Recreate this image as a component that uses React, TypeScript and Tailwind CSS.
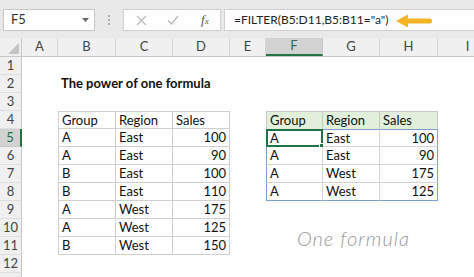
import React from "react";

const FONT = { fontFamily: "Lato, 'Open Sans', sans-serif" };

const colWidths = [36, 58, 57, 57, 36, 57, 57, 58, 60];
const colNames = ["A", "B", "C", "D", "E", "F", "G", "H", "I"];

type Cell = { text?: string; right?: boolean; bold?: boolean; cls?: string; sel?: boolean };

const t1 = [
  ["Group", "Region", "Sales"],
  ["A", "East", "100"],
  ["A", "East", "90"],
  ["B", "East", "100"],
  ["B", "East", "110"],
  ["A", "West", "175"],
  ["A", "West", "125"],
  ["B", "West", "150"],
];
const t2 = [
  ["Group", "Region", "Sales"],
  ["A", "East", "100"],
  ["A", "East", "90"],
  ["A", "West", "175"],
  ["A", "West", "125"],
];

function cellFor(row: number, col: number): Cell {
  if (row === 2 && col === 1) return { text: "The power of one formula", bold: true };
  if (row >= 4 && row <= 11 && col >= 1 && col <= 3) {
    const r = row - 4;
    const c = col - 1;
    let cls = "border-r border-b border-[#d0d0d0]";
    if (c === 0) cls += " border-l";
    if (r === 0) cls += " border-t";
    return { text: t1[r][c], right: r > 0 && c === 2, cls };
  }
  if (row >= 4 && row <= 8 && col >= 5 && col <= 7) {
    const r = row - 4;
    const c = col - 5;
    let cls = "";
    if (r === 0) {
      cls = "bg-[#e2efda] border-t border-r border-[#c9c9c9]";
      if (c === 0) cls += " border-l";
    } else {
      cls = "border-b";
      cls += r === 4 ? " border-b-[#7f9fd3]" : " border-b-[#d4d4d4]";
      cls += c === 2 ? " border-r border-r-[#7f9fd3]" : " border-r border-r-[#d4d4d4]";
      if (c === 0) cls += " border-l border-l-[#7f9fd3]";
      if (r === 1) cls += " border-t border-t-[#7f9fd3]";
    }
    return { text: t2[r][c], right: r > 0 && c === 2, cls, sel: row === 5 && col === 5 };
  }
  return {};
}

function Arrow() {
  return (
    <svg width="38" height="16" viewBox="0 0 38 16">
      <path d="M1 8 L13 1.5 L13 14.5 Z" fill="#f4b324" />
      <rect x="11" y="5.5" width="26" height="5" rx="2.5" fill="#f4b324" />
    </svg>
  );
}

export default function App() {
  const rows = Array.from({ length: 12 }, (_, i) => i + 1);
  return (
    <div className="relative w-[474px] h-[277px] overflow-hidden bg-white" style={FONT}>
      {/* Toolbar */}
      <div className="h-[38px] bg-[#e9e9e9] flex items-start pt-[9px] pl-[3px]">
        <div className="w-[92px] h-[22px] bg-white border border-[#c8c8c8] flex items-center justify-between pl-[7px] pr-[5px] text-[13px] text-[#333]">
          <span>F5</span>
          <svg width="7" height="5" viewBox="0 0 7 5"><path d="M0 0 L7 0 L3.5 4 Z" fill="#666" /></svg>
        </div>
        <div className="w-[28px] h-[22px] flex flex-col items-center justify-center gap-[2px]">
          <div className="w-[2px] h-[2px] bg-[#b0b0b0]" />
          <div className="w-[2px] h-[2px] bg-[#b0b0b0]" />
          <div className="w-[2px] h-[2px] bg-[#b0b0b0]" />
        </div>
        <div className="w-[98px] h-[22px] bg-white border border-[#d0d0d0] flex items-center pl-[12px]">
          <svg width="11" height="11" viewBox="0 0 11 11" className="mr-[20px]">
            <path d="M1 1 L10 10 M10 1 L1 10" stroke="#b8b8b8" strokeWidth="1.2" />
          </svg>
          <svg width="12" height="10" viewBox="0 0 12 10" className="mr-[22px]">
            <path d="M1 5.5 L4.5 9 L11 1" stroke="#b8b8b8" strokeWidth="1.2" fill="none" />
          </svg>
          <span className="text-[13px] italic text-[#555]" style={{ fontFamily: "'Liberation Serif', serif" }}>
            f<span className="text-[9px]">x</span>
          </span>
        </div>
        <div className="ml-[3px] flex-1 h-[22px] bg-white border-l border-y border-[#d0d0d0] flex items-center pl-[9px] text-[12px] text-[#222]">
          <span>=FILTER(B5:D11,B5:B11="a")</span>
          <span className="ml-[7px] mt-[1px] flex items-center"><Arrow /></span>
        </div>
      </div>
      {/* Column headers */}
      <div className="flex h-[19px] bg-[#f0f0f0] border-b border-[#c6c6c6]">
        <div className="w-[22px] shrink-0 border-r border-[#c6c6c6] relative">
          <svg width="11" height="11" viewBox="0 0 11 11" className="absolute right-[2px] bottom-[2px]">
            <path d="M11 0 L11 11 L0 11 Z" fill="#c4c4c4" />
          </svg>
        </div>
        {colNames.map((n, i) => (
          <div
            key={n}
            style={{ width: colWidths[i] }}
            className={
              "shrink-0 flex items-center justify-center text-[13px] border-r " +
              (n === "F"
                ? "bg-[#d2d2d2] text-[#3d6b4f] border-b-2 border-b-[#217346] border-r-[#c6c6c6]"
                : "text-[#444] border-[#d6d6d6]")
            }
          >
            {n}
          </div>
        ))}
      </div>
      {/* Rows */}
      {rows.map((r) => (
        <div key={r} className="flex h-[18px]">
          <div
            className={
              "w-[22px] shrink-0 flex items-center justify-center text-[13px] border-b " +
              (r === 5
                ? "bg-[#d2d2d2] text-[#217346] border-r-2 border-r-[#217346] border-b-[#c6c6c6]"
                : "bg-[#f0f0f0] text-[#444] border-r border-r-[#c6c6c6] border-b-[#dedede]")
            }
          >
            {r}
          </div>
          {colNames.map((n, ci) => {
            const c = cellFor(r, ci);
            return (
              <div
                key={n}
                style={{ width: colWidths[ci] }}
                className={
                  "shrink-0 relative h-[18px] text-[13px] leading-[17px] text-[#111] whitespace-nowrap " +
                  (c.right ? "text-right pr-[3px] " : "pl-[3px] ") +
                  (c.bold ? "font-bold text-[12.5px] " : "") +
                  (c.cls ?? "")
                }
              >
                {c.text}
                {c.sel && (
                  <div className="absolute -left-[1px] -top-[1px] -right-[1px] -bottom-[1px] border-2 border-[#217346]">
                    <div className="absolute -right-[3px] -bottom-[3px] w-[5px] h-[5px] bg-[#217346] border border-white" />
                  </div>
                )}
              </div>
            );
          })}
        </div>
      ))}
      <div className="flex h-[10px]">
        <div className="w-[22px] shrink-0 bg-[#f0f0f0] border-r border-[#c6c6c6]" />
      </div>
      {/* Handwritten note */}
      <div
        className="absolute left-[297px] top-[223px] text-[20px] italic font-light tracking-[1px] text-[#9a9a9a]"
        style={{ fontFamily: "Lato, sans-serif" }}
      >
        One formula
      </div>
    </div>
  );
}
